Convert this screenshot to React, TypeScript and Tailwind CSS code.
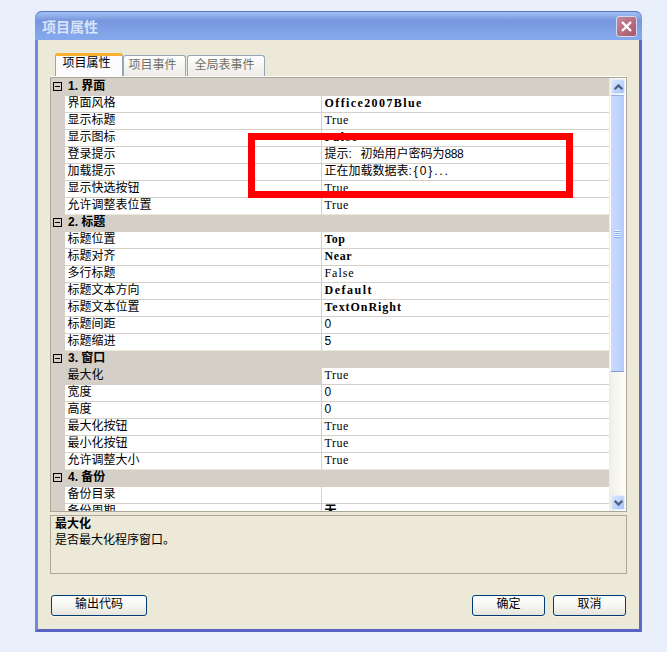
import clsx from "clsx";
import type { ReactNode } from "react";

type Row = {
  name: string;
  value: ReactNode;
  bold?: boolean;
  selected?: boolean;
  spacing?: string;
  sans?: boolean;
};

type Group = { title: string; rows: Row[] };

const TRUE = { value: "True", spacing: "tracking-[0.5px]" };

const groups: Group[] = [
  {
    title: "1. 界面",
    rows: [
      { name: "界面风格", value: "Office2007Blue", bold: true, spacing: "tracking-[1.4px]" },
      { name: "显示标题", ...TRUE },
      { name: "显示图标", value: "False", bold: true, spacing: "tracking-[1.5px]" },
      {
        name: "登录提示",
        sans: true,
        value: (
          <>
            提示<span className="inline-block w-[12px]">:</span>初始用户密码为<span className="tracking-[-0.5px]">888</span>
          </>
        ),
      },
      {
        name: "加载提示",
        sans: true,
        value: (
          <>
            正在加载数据表<span className="tracking-[1.9px]">{":{0}..."}</span>
          </>
        ),
      },
      { name: "显示快选按钮", ...TRUE },
      { name: "允许调整表位置", ...TRUE },
    ],
  },
  {
    title: "2. 标题",
    rows: [
      { name: "标题位置", value: "Top", bold: true, spacing: "tracking-[0.4px]" },
      { name: "标题对齐", value: "Near", bold: true, spacing: "tracking-[0.6px]" },
      { name: "多行标题", value: "False", spacing: "tracking-[0.95px]" },
      { name: "标题文本方向", value: "Default", bold: true, spacing: "tracking-[1.5px]" },
      { name: "标题文本位置", value: "TextOnRight", bold: true, spacing: "tracking-[0.95px]" },
      { name: "标题间距", value: "0", sans: true },
      { name: "标题缩进", value: "5", sans: true },
    ],
  },
  {
    title: "3. 窗口",
    rows: [
      { name: "最大化", ...TRUE, selected: true },
      { name: "宽度", value: "0", sans: true },
      { name: "高度", value: "0", sans: true },
      { name: "最大化按钮", ...TRUE },
      { name: "最小化按钮", ...TRUE },
      { name: "允许调整大小", ...TRUE },
    ],
  },
  {
    title: "4. 备份",
    rows: [
      { name: "备份目录", value: "" },
      { name: "备份周期", value: "无", bold: true, sans: true },
    ],
  },
];

function GroupHeader({ title }: { title: string }) {
  return (
    <div className="flex h-[17px] items-start bg-[#d4d0c8]">
      <svg className="ml-[2px] mt-[3px] h-[9px] w-[9px]" viewBox="0 0 9 9" shapeRendering="crispEdges">
        <rect x="0.5" y="0.5" width="8" height="8" fill="none" stroke="#000" />
        <path d="M2 4.5h5" stroke="#000" />
      </svg>
      <span className="ml-[6px] font-bold leading-[14px]">{title}</span>
    </div>
  );
}

function PropertyRow({ row, last }: { row: Row; last: boolean }) {
  const line = last ? "border-b-[#ece9d8]" : "border-b-[#d4d0c8]";
  return (
    <div className="flex h-[17px]">
      <div className="w-[14px] shrink-0 bg-[#d4d0c8]" />
      <div
        className={clsx(
          "w-[256px] shrink-0 border-b pl-[2.5px] leading-[14px]",
          line,
          row.selected ? "bg-[#d4d0c8]" : "bg-white",
        )}
      >
        {row.name}
      </div>
      <div
        className={clsx(
          "min-w-0 flex-1 border-b border-l border-l-[#d4d0c8] bg-white pl-[2.5px]",
          line,
          row.bold && "font-bold",
          row.sans
            ? "leading-[14px]"
            : "font-['Liberation_Serif','Noto_Sans_CJK_SC',serif] leading-[14px]",
          row.spacing,
        )}
      >
        {row.value}
      </div>
    </div>
  );
}

function ScrollButton({ up }: { up?: boolean }) {
  return (
    <div className="h-[17px] py-px pl-px">
      <div className="flex h-[15px] w-[14px] items-center justify-center rounded-[2px] border border-[#e4ecfd] bg-linear-to-br from-[#dce8ff] to-[#aac2f8]">
        <svg className="h-[6px] w-[9px] shrink-0" viewBox="0 0 9 6">
          <path d={up ? "M0.7 5.2L4.5 1.4L8.3 5.2" : "M0.7 0.8L4.5 4.6L8.3 0.8"} fill="none" stroke="#4d6185" strokeWidth="2.3" />
        </svg>
      </div>
    </div>
  );
}

function ScrollBar() {
  return (
    <div className="flex w-[17px] shrink-0 flex-col border-l border-[#eeede5] bg-linear-to-r from-[#f1f0e8] to-[#fefefb]">
      <ScrollButton up />
      <div className="mr-px flex h-[277px] flex-col items-center justify-center rounded-[2px] border border-b-[#7f9fdb] border-l-white border-r-white border-t-[#8fb0e8] bg-linear-to-r from-[#c9d9fe] via-[#c3d5fd] to-[#b3cafa]">
        <div className="grid">
          {[0, 1, 2, 3].map((i) => (
            <div key={i} className="h-[2px] w-[7px] border-t border-[#eef4fe] bg-[#8cb0f8]" />
          ))}
        </div>
      </div>
      <div className="flex-1" />
      <ScrollButton />
    </div>
  );
}

function DialogButton({ className, children }: { className: string; children: ReactNode }) {
  return (
    <button
      type="button"
      className={clsx(
        "h-[21px] rounded-[3px] border border-[#003c74] bg-linear-to-b from-white via-[#f6f6f3] to-[#e6e4dc] pb-[3px] text-center leading-[16px] shadow-[0_1px_0_#f5f3ea]",
        className,
      )}
    >
      {children}
    </button>
  );
}

const tabBase = "rounded-t-[3px] border border-b-0 border-[#91a7b4]";

export default function App() {
  return (
    <main className="relative h-[652px] w-[667px] overflow-hidden bg-[#e9f0fb] pl-[35px] pt-[11px] font-['Liberation_Sans','Noto_Sans_CJK_SC',sans-serif] text-[12px] text-black">
      <div className="flex h-[621px] w-[607px] flex-col rounded-t-[7px] border-x-[3px] border-b-[3px] border-b-[#5a62c4] border-l-[#7486dc] border-r-[#5f66cc] bg-[#ece9d8]">
        <header className="-mx-[3px] flex h-[29px] shrink-0 items-center justify-between rounded-t-[7px] border-t border-[#5b78c0] bg-linear-to-b from-[#9bbcf0] from-5% via-[#7796df] via-30% to-[#83a7ea] to-85% pl-[7px] pr-[5px]">
          <h1 className="pt-px text-[14px] font-bold leading-[20px] text-[#d8e4f8]">项目属性</h1>
          <button
            type="button"
            className="flex h-[21px] w-[21px] items-center justify-center rounded-[3px] border border-[#d5d9f0] bg-linear-to-br from-[#c48a9c] to-[#aa5566]"
          >
            <svg className="h-[11px] w-[11px]" viewBox="0 0 11 11">
              <path d="M1 1L10 10M10 1L1 10" stroke="#fff" strokeWidth="2.4" />
            </svg>
          </button>
        </header>

        <div className="ml-[12px] mt-[13px] flex h-[23px] w-[577px] shrink-0 items-end pl-[5px] leading-[18px]">
          <div className="h-[23px] w-[68px] overflow-hidden rounded-t-[3px] border-x border-t-[3px] border-[#91a7b4] border-t-[#fbb02d] bg-[#fcfcfe] pl-[6.5px] leading-[14px]">
            项目属性
          </div>
          <div className={clsx(tabBase, "h-[21px] w-[63px] bg-linear-to-b from-white to-[#ecebe6] pl-[4.5px] text-[#716f64]")}>
            项目事件
          </div>
          <div className={clsx(tabBase, "ml-px h-[21px] w-[78px] bg-linear-to-b from-white to-[#ecebe6] pl-[6.5px] text-[#716f64]")}>
            全局表事件
          </div>
        </div>

        <div className="ml-[12px] w-[577px] shrink-0 border-t border-white">
          <section className="flex h-[435px] overflow-hidden border border-[#aca899]">
            <div className="h-[433px] w-[558px] overflow-hidden pt-px">
              {groups.map((group, index) => (
                <div key={group.title} className={clsx(index === 0 && "-mt-px border-t border-[#d4d0c8]")}>
                  <GroupHeader title={group.title} />
                  {group.rows.map((row, i) => (
                    <PropertyRow key={row.name} row={row} last={i === group.rows.length - 1} />
                  ))}
                </div>
              ))}
            </div>
            <ScrollBar />
          </section>
        </div>

        <section className="ml-[12px] mt-[3px] h-[59px] w-[577px] shrink-0 border border-[#aca899] pl-[4px] pt-px">
          <h2 className="font-bold leading-[15px]">最大化</h2>
          <p className="leading-[16px]">是否最大化程序窗口。</p>
        </section>

        <footer className="ml-[13px] mt-[21px] flex w-[575px]">
          <DialogButton className="w-[96px]">输出代码</DialogButton>
          <DialogButton className="ml-auto w-[73px]">确定</DialogButton>
          <DialogButton className="ml-[8px] w-[73px]">取消</DialogButton>
        </footer>
      </div>

      {/* highlight around the two prompt rows */}
      <div className="absolute left-[248px] top-[133px] h-[65px] w-[325px] border-[7px] border-[#ff0000]" />
    </main>
  );
}
